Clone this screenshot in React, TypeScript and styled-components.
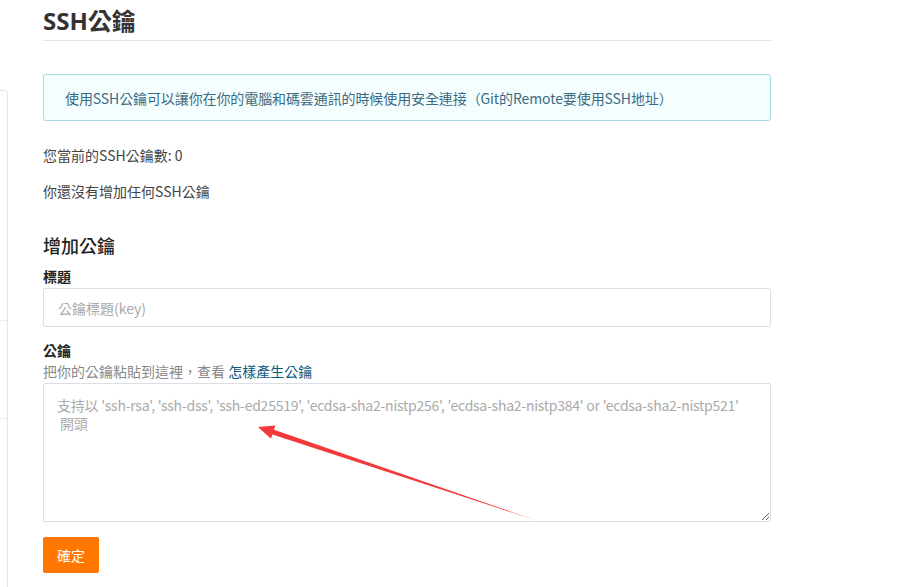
import { FC } from 'react'
import styled, { createGlobalStyle } from 'styled-components'

const GlobalStyle = createGlobalStyle`
	html, body {
		margin: 0;
		padding: 0;
		background: #fff;
	}
	body {
		font-family: 'Noto Sans CJK TC', 'Open Sans', sans-serif;
		font-size: 14px;
		color: #333;
	}
	* {
		box-sizing: border-box;
	}
`

const Page = styled.div`
	position: relative;
	display: flex;
	width: 898px;
	height: 587px;
	overflow: hidden;
`

const Sidebar = styled.aside`
	width: 8px;
	margin-top: 90px;
	margin-right: 35px;
	border: 1px solid #e6e6e6;
	border-left: none;
	border-bottom: none;
	border-radius: 0 4px 0 0;
	display: flex;
	flex-direction: column;
	.item {
		height: 98px;
		border-bottom: 1px solid #ececec;
	}
	.item.first {
		height: 230px;
	}
`

const Main = styled.main`
	width: 728px;
	display: flex;
	flex-direction: column;
`

const Title = styled.h1`
	margin: 0;
	padding-top: 3px;
	height: 41px;
	font-family: 'Open Sans', 'Noto Sans CJK TC', sans-serif;
	font-size: 24px;
	line-height: 36px;
	font-weight: 700;
	color: #333;
	border-bottom: 1px solid #e3e3e3;
`

const Alert = styled.div`
	margin-top: 33px;
	height: 47px;
	padding: 0 21px;
	display: flex;
	align-items: center;
	background: #f5feff;
	border: 1px solid #a9d7e2;
	border-radius: 3px;
	color: #3b6b83;
	font-size: 14px;
	line-height: 20px;
	letter-spacing: -0.1px;
`

const Text = styled.p<{ $top: number }>`
	margin: ${({ $top }) => $top}px 0 0;
	line-height: 20px;
	color: #444;
`

const SubTitle = styled.h3`
	margin: 31px 0 0;
	font-size: 18px;
	line-height: 26px;
	font-weight: 500;
	color: #222;
`

const Label = styled.label<{ $top: number }>`
	display: block;
	margin-top: ${({ $top }) => $top}px;
	font-weight: 700;
	line-height: 20px;
	color: #222;
`

const Input = styled.input`
	margin-top: 2px;
	width: 100%;
	height: 39px;
	padding: 0 14px;
	border: 1px solid #dcdfe6;
	border-radius: 2px;
	font-family: inherit;
	font-size: 14px;
	color: #333;
	outline: none;
	&::placeholder {
		color: #aaa;
	}
`

const Hint = styled.div`
	line-height: 22px;
	color: #888;
	a {
		color: #0d5b7f;
		text-decoration: none;
	}
`

const TextArea = styled.textarea`
	margin-top: 1px;
	width: 100%;
	height: 139px;
	padding: 12px 13px;
	border: 1px solid #dcdfe6;
	border-radius: 2px;
	font-family: inherit;
	font-size: 14px;
	line-height: 18px;
	color: #333;
	outline: none;
	resize: vertical;
	&::placeholder {
		color: #aaa;
		letter-spacing: -0.25px;
	}
`

const Button = styled.button`
	margin-top: 15px;
	width: 56px;
	height: 36px;
	padding: 0;
	border: none;
	border-radius: 2px;
	background: #ff7700;
	color: #fff;
	font-family: inherit;
	font-size: 14px;
	cursor: pointer;
`

const Annotation = styled.svg`
	position: absolute;
	top: 0;
	left: 0;
	pointer-events: none;
`

const keyTypes =
	"支持以 'ssh-rsa', 'ssh-dss', 'ssh-ed25519', 'ecdsa-sha2-nistp256', 'ecdsa-sha2-nistp384' or 'ecdsa-sha2-nistp521'\n 開頭"

const App: FC = () => {
	return (
		<>
			<GlobalStyle />
			<Page>
				<Sidebar>
					<div className="item first" />
					<div className="item" />
				</Sidebar>
				<Main>
					<Title>SSH公鑰</Title>
					<Alert>使用SSH公鑰可以讓你在你的電腦和碼雲通訊的時候使用安全連接（Git的Remote要使用SSH地址）</Alert>
					<Text $top={24}>您當前的SSH公鑰數: 0</Text>
					<Text $top={16}>你還沒有增加任何SSH公鑰</Text>
					<SubTitle>增加公鑰</SubTitle>
					<Label $top={8}>標題</Label>
					<Input placeholder="公鑰標題(key)" />
					<Label $top={13}>公鑰</Label>
					<Hint>
						把你的公鑰粘貼到這裡，查看 <a href="#">怎樣產生公鑰</a>
					</Hint>
					<TextArea placeholder={keyTypes} />
					<div>
						<Button>確定</Button>
					</div>
				</Main>
				<Annotation width="898" height="587" viewBox="0 0 898 587">
					<polygon
						points="258,427 275.4,425.5 274,429.7 538,521 272.4,434.5 271,438.7"
						fill="#f23a3a"
					/>
				</Annotation>
			</Page>
		</>
	)
}

export default App
